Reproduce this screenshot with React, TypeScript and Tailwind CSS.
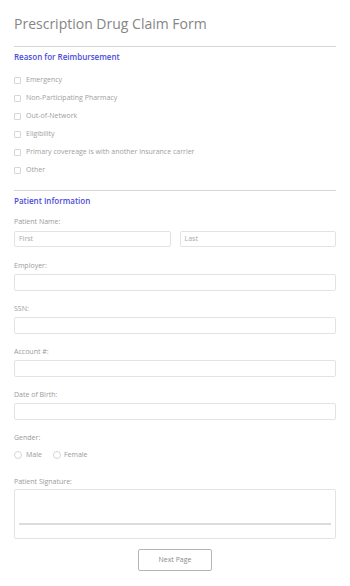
import type { ReactNode } from "react"

const font = { fontFamily: '"Open Sans", "Liberation Sans", sans-serif' }

const reasons = [
  "Emergency",
  "Non-Participating Pharmacy",
  "Out-of-Network",
  "Eligibility",
  "Primary covereage is with another insurance carrier",
  "Other",
]

function SectionTitle({ children }: { children: ReactNode }) {
  return (
    <>
      <div className="h-px bg-[#d6d6d6]" />
      <h2 className="mt-[4px] text-[8px] leading-[12px] font-semibold text-[#4c4cd9]">
        {children}
      </h2>
    </>
  )
}

function Label({ children, className = "" }: { children: ReactNode; className?: string }) {
  return <div className={`text-[7px] leading-[10px] text-[#9a9a9a] ${className}`}>{children}</div>
}

function Field({ label, className = "" }: { label: string; className?: string }) {
  return (
    <div className={className}>
      <Label>{label}</Label>
      <div className="mt-[3px] h-[17px] rounded-[2px] border border-[#e3e3e3] bg-white" />
    </div>
  )
}

export default function App() {
  return (
    <div className="min-h-[586px] bg-white px-[14px] pt-[14px]" style={font}>
      {/* Header */}
      <h1 className="text-[14px] leading-[20px] font-normal text-[#858585]">
        Prescription Drug Claim Form
      </h1>

      <div className="mt-[12px]">
        <SectionTitle>Reason for Reimbursement</SectionTitle>
      </div>

      {/* Reasons */}
      <div className="mt-[8px] flex flex-col">
        {reasons.map((r) => (
          <div key={r} className="flex h-[18px] items-center gap-[5px]">
            <span className="h-[7px] w-[7px] shrink-0 rounded-[1px] border border-[#d6d6d6] bg-white" />
            <span className="text-[7px] leading-[10px] text-[#a0a0a0]">{r}</span>
          </div>
        ))}
      </div>

      <div className="mt-[11px]">
        <SectionTitle>Patient Information</SectionTitle>
      </div>

      {/* Patient name */}
      <div className="mt-[10px]">
        <Label>Patient Name:</Label>
        <div className="mt-[4px] grid grid-cols-2 gap-[9px]">
          <div className="flex h-[16px] items-center rounded-[2px] border border-[#e3e3e3] px-[4px] text-[7px] text-[#a8a8a8]">
            First
          </div>
          <div className="flex h-[16px] items-center rounded-[2px] border border-[#e3e3e3] px-[4px] text-[7px] text-[#a8a8a8]">
            Last
          </div>
        </div>
      </div>

      <Field label="Employer:" className="mt-[14px]" />
      <Field label="SSN:" className="mt-[13px]" />
      <Field label="Account #:" className="mt-[13px]" />
      <Field label="Date of Birth:" className="mt-[13px]" />

      {/* Gender */}
      <div className="mt-[13px]">
        <Label>Gender:</Label>
        <div className="mt-[7px] flex h-[10px] items-center">
          <span className="h-[8px] w-[8px] rounded-full border border-[#d6d6d6]" />
          <span className="ml-[4px] text-[7px] text-[#9a9a9a]">Male</span>
          <span className="ml-[11px] h-[8px] w-[8px] rounded-full border border-[#d6d6d6]" />
          <span className="ml-[3px] text-[7px] text-[#9a9a9a]">Female</span>
        </div>
      </div>

      {/* Signature */}
      <div className="mt-[17px]">
        <Label>Patient Signature:</Label>
        <div className="mt-[2px] flex h-[50px] flex-col justify-end rounded-[2px] border border-[#e3e3e3] px-[4px] pb-[13px]">
          <div className="h-[2px] bg-[#dcdcdc]" />
        </div>
      </div>

      <div className="mt-[10px] flex justify-center">
        <button className="h-[22px] w-[74px] rounded-[2px] border border-[#b5b5b5] bg-white text-[7px] text-[#8a8a8a]">
          Next Page
        </button>
      </div>
    </div>
  )
}
